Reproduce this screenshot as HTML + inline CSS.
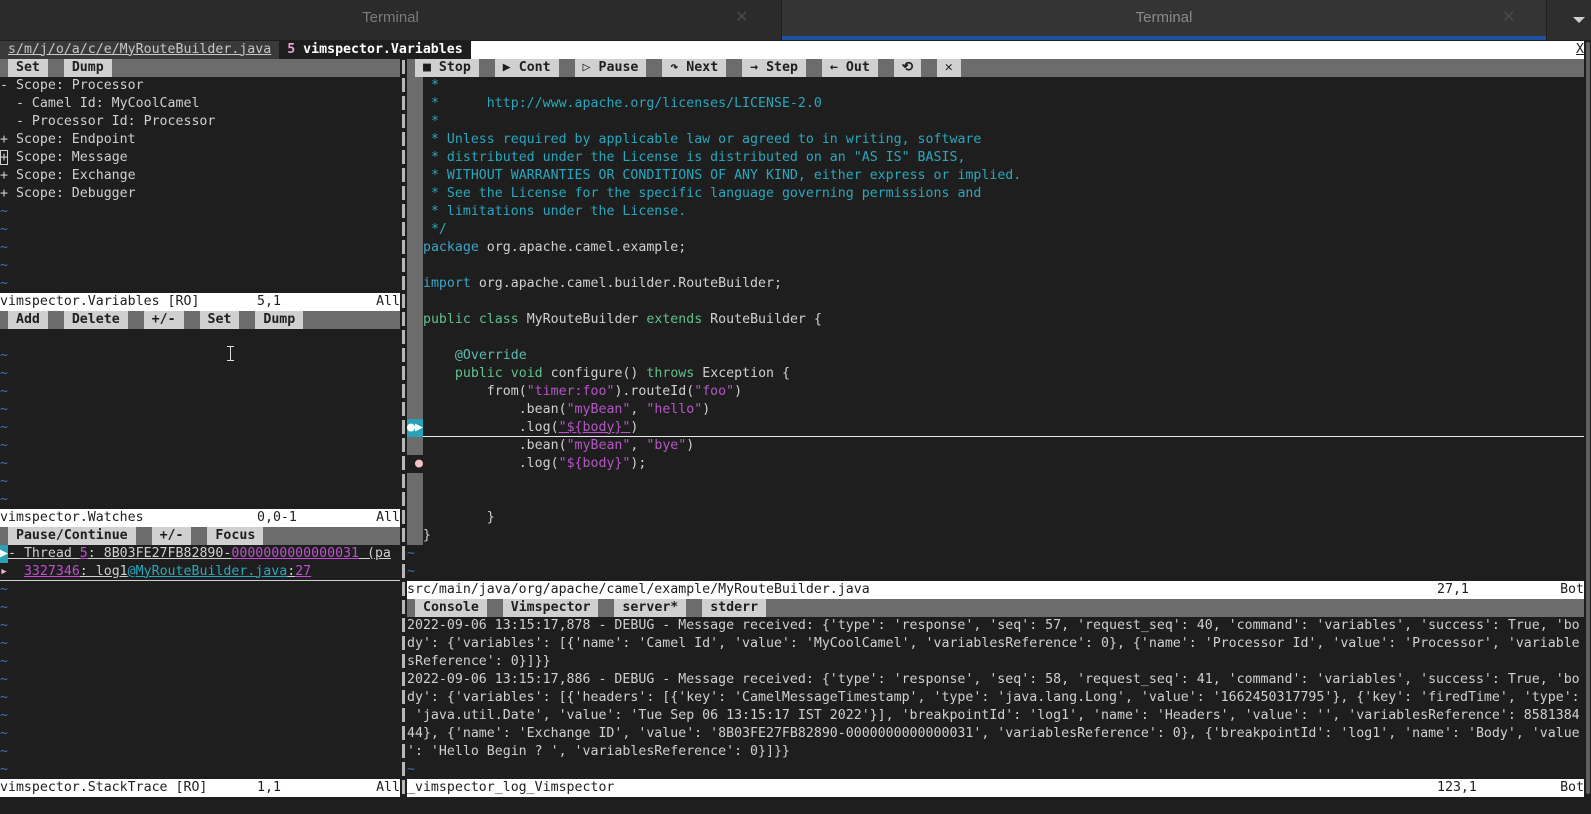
<!DOCTYPE html>
<html><head><meta charset="utf-8">
<style>
html,body{margin:0;padding:0;width:1591px;height:814px;overflow:hidden;background:#1e1e1e;}
#top{position:absolute;left:0;top:0;width:1591px;height:40px;background:#2b2b2b;font-family:"Liberation Sans",sans-serif;}
.tab{position:absolute;top:0;height:40px;line-height:36px;text-align:center;color:#7a7a7a;font-size:15px;}
.pane{position:absolute;top:40.7px;margin:0;font-family:"DejaVu Sans Mono","Liberation Mono",monospace;font-size:13.25px;line-height:18px;color:#d0d0d0;white-space:pre;}
.ln{height:18px;display:block;overflow:hidden;position:relative;}
.st{background:#fff;color:#1e1e1e;}
.st b{font-weight:normal;position:absolute;top:0;}
.wb{background:#6c6c6c;}
.bt{background:#d0d0d0;color:#1e1e1e;font-weight:bold;}
.sg,.bt,.ib{display:inline-block;height:18px;vertical-align:top;}
.t{color:#3d6fb8;}
.c{color:#2aa7be;}
.kw{color:#3aa5c8;}
.g{color:#62c08a;}
.an{color:#5dbcb0;}
.s{color:#b457c4;}
.m{color:#c04fd0;}
.sg{background:#6c6c6c;}
.u{text-decoration:underline;}
</style></head><body>
<div id="top">
  <div class="tab" style="left:0;width:781px;background:#2b2b2b;">Terminal<span style="position:absolute;left:735px;color:#4a4a4a;font-size:16px;">✕</span></div>
  <div style="position:absolute;left:781px;top:0;width:1px;height:40px;background:#1f1f1f"></div>
  <div class="tab" style="left:782px;width:764px;background:#343434;color:#8a8a8a;">Terminal<span style="position:absolute;left:720px;color:#4a4a4a;font-size:16px;">✕</span></div>
  <div style="position:absolute;left:782px;top:36px;width:764px;height:4px;background:#1c52a0"></div>
  <div style="position:absolute;left:1546px;top:0;width:1px;height:40px;background:#1f1f1f"></div>
  <div style="position:absolute;left:1547px;top:0;width:44px;height:40px;background:#2e2e2e;"></div>
  <div style="position:absolute;left:1573px;top:17px;width:0;height:0;border-left:6px solid transparent;border-right:6px solid transparent;border-top:6px solid #cfcfcf;"></div>
</div>

<div class="pane" style="left:0;width:1584px;"><span class="ln" style="background:#fff;"><span class="ib" style="background:#3a3a3a;color:#c8c8c8;"> <span class="u">s/m/j/o/a/c/e/MyRouteBuilder.java</span> </span><span class="ib" style="background:#1e1e1e;color:#fff;font-weight:bold;"> <span style="color:#e9a3d8">5</span> vimspector.Variables </span></span></div>
<div class="pane" style="left:1576px;width:8px;color:#1e1e1e;"><span class="u">X</span></div>

<div style="position:absolute;left:402px;top:60px;width:3px;height:736px;background:repeating-linear-gradient(to bottom,#b8b8b8 0,#b8b8b8 14px,transparent 14px,transparent 18px);"></div>
<div style="position:absolute;left:1586px;top:42px;width:4px;height:752px;background:#5e5e5e;border-radius:2px;"></div>

<pre class="pane" style="left:0;top:58.7px;width:400px;"><span class="ln wb"> <span class="bt"> Set </span>  <span class="bt"> Dump </span></span><span class="ln">- Scope: Processor</span><span class="ln">  - Camel Id: MyCoolCamel</span><span class="ln">  - Processor Id: Processor</span><span class="ln">+ Scope: Endpoint</span><span class="ln"><span style="outline:1px solid #d0d0d0;outline-offset:-1px;">+</span> Scope: Message</span><span class="ln">+ Scope: Exchange</span><span class="ln">+ Scope: Debugger</span><span class="ln t">~</span><span class="ln t">~</span><span class="ln t">~</span><span class="ln t">~</span><span class="ln t">~</span><span class="ln st"><b style="left:0">vimspector.Variables [RO]</b><b style="left:257px">5,1</b><b style="right:0">All</b></span><span class="ln wb"> <span class="bt"> Add </span>  <span class="bt"> Delete </span>  <span class="bt"> +/- </span>  <span class="bt"> Set </span>  <span class="bt"> Dump </span></span><span class="ln"> </span><span class="ln t">~</span><span class="ln t">~</span><span class="ln t">~</span><span class="ln t">~</span><span class="ln t">~</span><span class="ln t">~</span><span class="ln t">~</span><span class="ln t">~</span><span class="ln t">~</span><span class="ln st"><b style="left:0">vimspector.Watches</b><b style="left:257px">0,0-1</b><b style="right:0">All</b></span><span class="ln wb"> <span class="bt"> Pause/Continue </span>  <span class="bt"> +/- </span>  <span class="bt"> Focus </span></span><span class="ln"><span class="ib" style="background:#2aa1b5;color:#fff;">▶</span><span class="u">- Thread </span><span class="m u">5</span><span class="u">: 8B03FE27FB82890-</span><span class="m u">0000000000000031</span><span class="u"> (pa</span></span><span class="ln"><span class="ib" style="height:17px;border-bottom:1px solid #d0d0d0;width:400px;"><span style="color:#f2b8d0;">▸</span>  <span class="m u">3327346</span><span class="u">: log1</span><span class="c u">@MyRouteBuilder.java</span><span class="u">:</span><span class="m u">27</span></span></span><span class="ln t">~</span><span class="ln t">~</span><span class="ln t">~</span><span class="ln t">~</span><span class="ln t">~</span><span class="ln t">~</span><span class="ln t">~</span><span class="ln t">~</span><span class="ln t">~</span><span class="ln t">~</span><span class="ln t">~</span><span class="ln st"><b style="left:0">vimspector.StackTrace [RO]</b><b style="left:257px">1,1</b><b style="right:0">All</b></span></pre>

<pre class="pane" style="left:407px;top:58.7px;width:1177px;"><span class="ln wb"> <span class="bt"> ■ Stop </span>  <span class="bt"> ▶ Cont </span>  <span class="bt"> ▷ Pause </span>  <span class="bt"> ↷ Next </span>  <span class="bt"> → Step </span>  <span class="bt"> ← Out </span>  <span class="bt"> ⟲ </span>  <span class="bt"> ✕ </span></span><span class="ln"><span class="sg">  </span><span class="c"> *</span></span><span class="ln"><span class="sg">  </span><span class="c"> *      http://www.apache.org/licenses/LICENSE-2.0</span></span><span class="ln"><span class="sg">  </span><span class="c"> *</span></span><span class="ln"><span class="sg">  </span><span class="c"> * Unless required by applicable law or agreed to in writing, software</span></span><span class="ln"><span class="sg">  </span><span class="c"> * distributed under the License is distributed on an "AS IS" BASIS,</span></span><span class="ln"><span class="sg">  </span><span class="c"> * WITHOUT WARRANTIES OR CONDITIONS OF ANY KIND, either express or implied.</span></span><span class="ln"><span class="sg">  </span><span class="c"> * See the License for the specific language governing permissions and</span></span><span class="ln"><span class="sg">  </span><span class="c"> * limitations under the License.</span></span><span class="ln"><span class="sg">  </span><span class="c"> */</span></span><span class="ln"><span class="sg">  </span><span class="kw">package</span> org.apache.camel.example;</span><span class="ln"><span class="sg">  </span></span><span class="ln"><span class="sg">  </span><span class="kw">import</span> org.apache.camel.builder.RouteBuilder;</span><span class="ln"><span class="sg">  </span></span><span class="ln"><span class="sg">  </span><span class="g">public</span> <span class="g">class</span> MyRouteBuilder <span class="g">extends</span> RouteBuilder {</span><span class="ln"><span class="sg">  </span></span><span class="ln"><span class="sg">  </span>    <span class="an">@Override</span></span><span class="ln"><span class="sg">  </span>    <span class="g">public</span> <span class="g">void</span> configure() <span class="g">throws</span> Exception {</span><span class="ln"><span class="sg">  </span>        from(<span class="s">"timer:foo"</span>).routeId(<span class="s">"foo"</span>)</span><span class="ln"><span class="sg">  </span>            .bean(<span class="s">"myBean"</span>, <span class="s">"hello"</span>)</span><span class="ln"><span class="ib" style="background:#2aa1b5;color:#fff;">●▶</span><span class="ib" style="width:1161px;border-bottom:1px solid #e8e8e8;height:17px;">            .log(<span class="s u">"${body}"</span>)</span></span><span class="ln"><span class="sg">  </span>            .bean(<span class="s">"myBean"</span>, <span class="s">"bye"</span>)</span><span class="ln"><span style="color:#f5c0c8;"> ●</span>            .log(<span class="s">"${body}"</span>);</span><span class="ln"><span class="sg">  </span></span><span class="ln"><span class="sg">  </span></span><span class="ln"><span class="sg">  </span>        }</span><span class="ln"><span class="sg">  </span>}</span><span class="ln t">~</span><span class="ln t">~</span><span class="ln st"><b style="left:0">src/main/java/org/apache/camel/example/MyRouteBuilder.java</b><b style="left:1030px">27,1</b><b style="right:0">Bot</b></span><span class="ln wb"> <span class="bt"> Console </span>  <span class="bt"> Vimspector </span>  <span class="bt"> server* </span>  <span class="bt"> stderr </span></span><span class="ln">2022-09-06 13:15:17,878 - DEBUG - Message received: {'type': 'response', 'seq': 57, 'request_seq': 40, 'command': 'variables', 'success': True, 'bo</span><span class="ln">dy': {'variables': [{'name': 'Camel Id', 'value': 'MyCoolCamel', 'variablesReference': 0}, {'name': 'Processor Id', 'value': 'Processor', 'variable</span><span class="ln">sReference': 0}]}}</span><span class="ln">2022-09-06 13:15:17,886 - DEBUG - Message received: {'type': 'response', 'seq': 58, 'request_seq': 41, 'command': 'variables', 'success': True, 'bo</span><span class="ln">dy': {'variables': [{'headers': [{'key': 'CamelMessageTimestamp', 'type': 'java.lang.Long', 'value': '1662450317795'}, {'key': 'firedTime', 'type':</span><span class="ln"> 'java.util.Date', 'value': 'Tue Sep 06 13:15:17 IST 2022'}], 'breakpointId': 'log1', 'name': 'Headers', 'value': '', 'variablesReference': 8581384</span><span class="ln">44}, {'name': 'Exchange ID', 'value': '8B03FE27FB82890-0000000000000031', 'variablesReference': 0}, {'breakpointId': 'log1', 'name': 'Body', 'value</span><span class="ln">': 'Hello Begin ? ', 'variablesReference': 0}]}}</span><span class="ln t">~</span><span class="ln st"><b style="left:0">_vimspector_log_Vimspector</b><b style="left:1030px">123,1</b><b style="right:0">Bot</b></span></pre>

<div style="position:absolute;left:230px;top:346px;width:1px;height:14px;background:#ddd;"></div>
<div style="position:absolute;left:227px;top:346px;width:7px;height:1px;background:#ddd;"></div>
<div style="position:absolute;left:227px;top:360px;width:7px;height:1px;background:#ddd;"></div>
</body></html>
